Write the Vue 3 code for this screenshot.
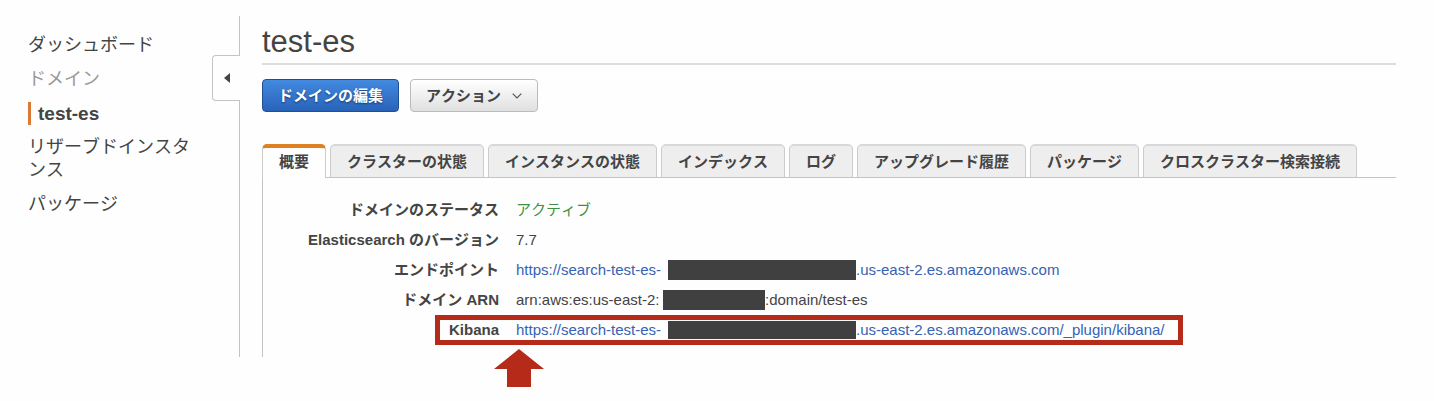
<script setup>
import { ref } from 'vue'

const tabs = ['概要', 'クラスターの状態', 'インスタンスの状態', 'インデックス', 'ログ', 'アップグレード履歴', 'パッケージ', 'クロスクラスター検索接続']
const active = ref(0)
</script>

<template>
  <div class="console">
    <aside class="sidebar">
      <nav class="nav">
        <a href="#dashboard">ダッシュボード</a>
        <span class="group">ドメイン</span>
        <a href="#test-es" class="current">test-es</a>
        <a href="#reserved">リザーブドインスタンス</a>
        <a href="#packages">パッケージ</a>
      </nav>
      <button class="collapse" type="button" aria-label="サイドバーを閉じる">
        <svg width="6" height="10" viewBox="0 0 6 10"><path d="M6 0v10L0 5z" fill="#444" /></svg>
      </button>
    </aside>

    <main class="main">
      <h1>test-es</h1>
      <div class="actions">
        <button class="btn primary" type="button">ドメインの編集</button>
        <button class="btn" type="button">
          アクション
          <svg width="10" height="6" viewBox="0 0 10 6"><path d="M.7.7 5 5 9.3.7" fill="none" stroke="#555" stroke-width="1.2" /></svg>
        </button>
      </div>

      <div class="tabs" role="tablist">
        <button
          v-for="(tab, i) in tabs"
          :key="tab"
          type="button"
          role="tab"
          class="tab"
          :class="{ active: i === active }"
          :aria-selected="i === active"
          @click="active = i"
        >{{ tab }}</button>
      </div>

      <dl class="details">
        <div class="row">
          <dt>ドメインのステータス</dt>
          <dd class="ok">アクティブ</dd>
        </div>
        <div class="row">
          <dt>Elasticsearch のバージョン</dt>
          <dd>7.7</dd>
        </div>
        <div class="row">
          <dt>エンドポイント</dt>
          <dd><a href="#endpoint"><span class="url">https://search-test-es-</span><span class="mask wide"></span><span>.us-east-2.es.amazonaws.com</span></a></dd>
        </div>
        <div class="row">
          <dt>ドメイン ARN</dt>
          <dd><span class="arn">arn:aws:es:us-east-2:</span><span class="mask"></span><span>:domain/test-es</span></dd>
        </div>
        <div class="row">
          <dt>Kibana</dt>
          <dd><a href="#kibana"><span class="url">https://search-test-es-</span><span class="mask wide low"></span><span>.us-east-2.es.amazonaws.com/_plugin/kibana/</span></a></dd>
          <div class="frame"></div>
          <svg class="arrow" width="50" height="38" viewBox="0 0 50 38"><path d="M25 0 50 20H37V38H13V20H0z" fill="#b52a18" /></svg>
        </div>
      </dl>
    </main>
  </div>
</template>

<style>
body {
  margin: 0;
  background: #fefefe;
}
</style>

<style scoped>
.console {
  display: flex;
  padding: 16px 38px 44px 0;
  color: #444;
  font: 15px/30px "Liberation Sans", "Noto Sans CJK JP", sans-serif;
  font-kerning: none;
}
button {
  font: inherit;
  font-kerning: none;
  color: inherit;
  cursor: pointer;
}
a {
  color: inherit;
  text-decoration: none;
}
.sidebar {
  position: relative;
  box-sizing: border-box;
  flex: 0 0 240px;
  padding: 18px 42px 0 28px;
  border-right: 1px solid #c4c4c4;
}
.nav {
  display: flex;
  flex-direction: column;
  gap: 11px;
  font-size: 18px;
  line-height: 23px;
}
.group {
  color: #999;
}
.current {
  padding-left: 7px;
  border-left: 3px solid #d97b35;
  font-size: 19px;
  font-weight: bold;
}
.collapse {
  position: absolute;
  top: 39px;
  right: -1px;
  display: flex;
  align-items: center;
  width: 28px;
  height: 46px;
  padding: 0 0 0 11px;
  border: 1px solid #c4c4c4;
  border-right: 0;
  border-radius: 4px 0 0 4px;
  background: #fefefe;
}
.main {
  flex: 1;
  min-width: 0;
  padding-left: 22px;
}
h1 {
  margin: 0;
  padding: 9px 0 4px;
  border-bottom: 2px solid #ddd;
  font-size: 31px;
  font-weight: normal;
  line-height: 34px;
}
.actions {
  display: flex;
  gap: 11px;
  padding: 14px 0 32px;
}
.btn {
  display: flex;
  align-items: center;
  gap: 11px;
  height: 33px;
  padding: 0 15px;
  border: 1px solid #bbb;
  border-radius: 4px;
  background: linear-gradient(#fff, #e0e0e0);
  font-weight: bold;
}
.primary {
  border-color: #1c4f94;
  background: linear-gradient(#438ae0, #2863b8);
  color: #fff;
  text-shadow: 0 1px 2px #123a70;
}
.tabs {
  display: flex;
  gap: 4px;
  border-bottom: 1px solid #c4c4c4;
}
.tab {
  height: 33px;
  padding: 0 16px;
  border: 1px solid #ccc;
  border-top: 2px solid #d8d8d8;
  border-bottom: 0;
  border-radius: 5px 5px 0 0;
  background: #eee;
  font-weight: bold;
  line-height: 30px;
  white-space: nowrap;
}
.tab.active {
  height: 34px;
  margin-bottom: -1px;
  padding-bottom: 2px;
  border-top: 4px solid #dd8122;
  background: #fefefe;
  line-height: 26px;
}
.details {
  margin: 0;
  padding: 17px 0 12px;
  border-left: 1px solid #c4c4c4;
}
.row {
  position: relative;
  display: grid;
  grid-template-columns: 236px 1fr;
  column-gap: 17px;
  height: 30px;
  white-space: nowrap;
}
dt {
  font-weight: bold;
  text-align: right;
}
dd {
  display: flex;
  margin: 0;
}
dd a {
  display: flex;
  color: #3562b5;
}
.ok {
  color: #3f9142;
}
.url {
  min-width: 152px;
}
.arn {
  min-width: 147px;
}
.mask {
  align-self: center;
  width: 102px;
  height: 20px;
  background: #404040;
}
.wide {
  width: 188px;
}
.low {
  height: 18px;
}
.frame {
  position: absolute;
  top: 0;
  left: 172px;
  box-sizing: border-box;
  width: 748px;
  height: 30px;
  border: 5px solid #b52a18;
}
.arrow {
  position: absolute;
  top: 34px;
  left: 231px;
}
</style>
